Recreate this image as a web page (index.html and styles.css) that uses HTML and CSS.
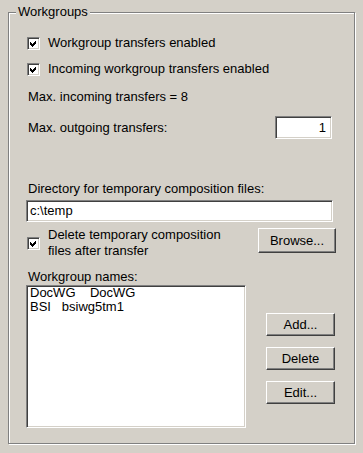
FILE: index.html
```html
<!DOCTYPE html>
<html lang="en">
<head>
  <meta charset="UTF-8">
  <title>Workgroups</title>
  <link rel="stylesheet" href="styles.css">
</head>
<body>
  <fieldset class="group">
    <legend>Workgroups</legend>

    <!-- Options -->
    <label class="check-row">
      <span class="checkbox"><svg viewBox="0 0 9 9" width="9" height="9"><polygon points="1,3 3,5 7,1 7,4 3,8 1,6" fill="#000"/></svg></span>
      Workgroup transfers enabled
    </label>
    <label class="check-row second">
      <span class="checkbox"><svg viewBox="0 0 9 9" width="9" height="9"><polygon points="1,3 3,5 7,1 7,4 3,8 1,6" fill="#000"/></svg></span>
      Incoming workgroup transfers enabled
    </label>

    <div class="text-row incoming">Max. incoming transfers = 8</div>

    <div class="outgoing">
      <span>Max. outgoing transfers:</span>
      <div class="edit small">1</div>
    </div>

    <!-- Temporary files -->
    <div class="text-row dir-label">Directory for temporary composition files:</div>
    <div class="edit wide">c:\temp</div>

    <div class="delete-row">
      <label class="check-row multi">
        <span class="checkbox"><svg viewBox="0 0 9 9" width="9" height="9"><polygon points="1,3 3,5 7,1 7,4 3,8 1,6" fill="#000"/></svg></span>
        <span>Delete temporary composition<br>files after transfer</span>
      </label>
      <button class="btn browse">Browse...</button>
    </div>

    <!-- Workgroup list -->
    <div class="text-row names-label">Workgroup names:</div>
    <div class="names-row">
      <ul class="listbox">
        <li>DocWG    DocWG</li>
        <li>BSI   bsiwg5tm1</li>
      </ul>
      <div class="btn-col">
        <button class="btn">Add...</button>
        <button class="btn">Delete</button>
        <button class="btn">Edit...</button>
      </div>
    </div>
  </fieldset>
</body>
</html>
```

FILE: styles.css
```css
* {
  box-sizing: border-box;
}
body {
  margin: 0;
  width: 363px;
  height: 453px;
  overflow: hidden;
  background-color: #d4d0c8;
  color: #000;
  font-family: "Liberation Sans", Arial, sans-serif;
  font-size: 13px;
}
/* --- Group box (etched) --- */
.group {
  margin: 5px 8px 0 8px;
  padding: 16px 18px 15px 18px;
  min-width: 0;
  border: 1px solid #808080;
  box-shadow: inset 1px 1px 0 #fff, 1px 1px 0 #fff;
}
.group legend {
  margin-left: -11px;
  padding: 0 2px;
  line-height: 14px;
  background-color: #d4d0c8;
}
/* --- Checkboxes --- */
.check-row {
  display: flex;
  align-items: center;
  height: 16px;
  line-height: 16px;
}
.check-row.second {
  margin-top: 10px;
}
.check-row.multi {
  height: auto;
}
.checkbox {
  flex: none;
  display: flex;
  align-items: center;
  justify-content: center;
  width: 13px;
  height: 13px;
  margin-right: 8px;
  background-color: #fff;
  border: 1px solid;
  border-color: #808080 #fff #fff #808080;
  box-shadow: inset 1px 1px 0 #404040, inset -1px -1px 0 #d4d0c8;
}
.checkbox svg {
  display: block;
  shape-rendering: crispEdges;
}
/* --- Labels --- */
.text-row {
  line-height: 16px;
  padding-left: 1px;
}
.incoming {
  margin-top: 12px;
}
.dir-label {
  margin-top: 42px;
}
.names-label {
  margin-top: 10px;
}
/* --- Edit fields (sunken) --- */
.edit {
  background-color: #fff;
  border: 1px solid;
  border-color: #808080 #fff #fff #808080;
  box-shadow: inset 1px 1px 0 #404040, inset -1px -1px 0 #d4d0c8;
}
.outgoing {
  display: flex;
  align-items: center;
  justify-content: space-between;
  margin-top: 11px;
  padding-left: 1px;
}
.edit.small {
  width: 57px;
  height: 23px;
  margin-right: 4px;
  padding-right: 5px;
  line-height: 21px;
  text-align: right;
}
.edit.wide {
  height: 22px;
  margin: 3px 3px 0 -1px;
  padding-left: 3px;
  line-height: 20px;
}
/* --- Delete option + Browse --- */
.delete-row {
  display: flex;
  justify-content: space-between;
  align-items: flex-start;
  margin-top: 5px;
}
.btn {
  width: 69px;
  height: 23px;
  padding: 0;
  background-color: #d4d0c8;
  color: #000;
  font-family: inherit;
  font-size: 13px;
  border: 1px solid;
  border-color: #fff #404040 #404040 #fff;
  box-shadow: inset -1px -1px 0 #808080;
  border-radius: 0;
}
.btn.browse {
  width: 78px;
  height: 25px;
  margin-top: 1px;
}
/* --- Workgroup list --- */
.names-row {
  display: flex;
  justify-content: space-between;
  align-items: flex-start;
}
.listbox {
  width: 220px;
  height: 143px;
  margin: 0 0 0 -1px;
  padding: 0 3px;
  list-style: none;
  background-color: #fff;
  border: 1px solid;
  border-color: #808080 #fff #fff #808080;
  box-shadow: inset 1px 1px 0 #404040, inset -1px -1px 0 #d4d0c8;
}
.listbox li {
  line-height: 14px;
  white-space: pre;
}
.btn-col {
  display: flex;
  flex-direction: column;
  gap: 11px;
  margin-top: 28px;
  margin-right: 1px;
}
```
